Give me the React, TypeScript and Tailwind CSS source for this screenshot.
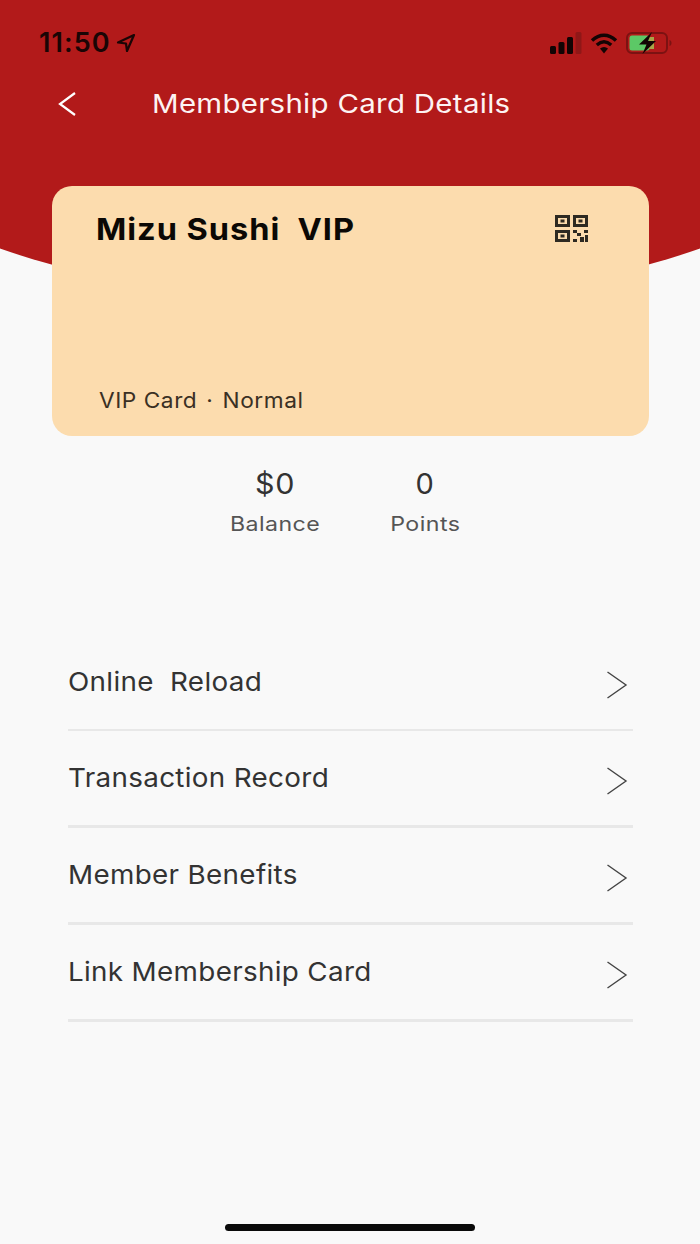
const rows = [
  { label: "Online  Reload", line: "h-[2px]" },
  { label: "Transaction Record", line: "h-[3px]" },
  { label: "Member Benefits", line: "h-[3px]" },
  { label: "Link Membership Card", line: "h-[3px]" },
];

function StatusIcons() {
  return (
    <div className="flex items-center gap-[8px]">
      <svg width="32" height="22" viewBox="0 0 32 22">
        <rect x="0" y="14" width="6" height="8" rx="1.5" fill="#120404" />
        <rect x="8.5" y="10" width="6" height="12" rx="1.5" fill="#120404" />
        <rect x="17" y="5" width="6" height="17" rx="1.5" fill="#120404" />
        <rect x="25.5" y="0" width="6" height="22" rx="1.5" fill="#8f1717" />
      </svg>
      <svg width="28" height="21" viewBox="0 0 28 21" fill="none">
        <path d="M2 7.500C9.500 .5 18.500 .5 26 7.500" stroke="#120404" strokeWidth="3.400" />
        <path d="M6.800 12C11.500 7.800 16.500 7.800 21.200 12" stroke="#120404" strokeWidth="3.400" />
        <path d="M10 15.500C12.500 13.500 15.500 13.500 18 15.500L14 20.500Z" fill="#120404" />
      </svg>
      <svg width="46" height="22" viewBox="0 0 46 22" fill="none">
        <rect x="1" y="1" width="40" height="20" rx="5" stroke="#7c1212" strokeWidth="2" />
        <rect x="3.500" y="3.500" width="20" height="15" rx="2.500" fill="#5cc866" />
        <rect x="23" y="5" width="5" height="12" fill="#a8a548" />
        <path d="M43.500 8V14C45 13.500 45.500 12.500 45.500 11C45.500 9.500 45 8.500 43.500 8Z" fill="#7c1212" />
        <path d="M26 0L13 12.500H20.500L16.500 22L30 9H22Z" fill="#120404" />
      </svg>
    </div>
  );
}

function QrIcon() {
  return (
    <svg width="33" height="27" viewBox="0 0 33 27" fill="#2e2a22">
      <path fillRule="evenodd" d="M0 0H15V12H0ZM3 3V9H12V3Z" />
      <path d="M5.500 4.500H9.500V7.500H5.500Z" />
      <path fillRule="evenodd" d="M18 0H33V12H18ZM21 3V9H30V3Z" />
      <path d="M23.500 4.500H27.500V7.500H23.500Z" />
      <path fillRule="evenodd" d="M0 15H15V27H0ZM3 18V24H12V18Z" />
      <path d="M5.500 19.500H9.500V22.500H5.500Z" />
      <path d="M18 15H22V18H18ZM29 15H33V18H29ZM22 18H26V21H22ZM18 24H22V27H18ZM25 22H29V27H25ZM30 20H33V27H30Z" />
    </svg>
  );
}

export default function App() {
  return (
    <div className="relative h-[1244px] w-[700px] overflow-hidden bg-[#f9f9f9] font-['Inter',sans-serif]">
      <div className="absolute left-[-150px] top-0 h-[300px] w-[1000px] rounded-b-[500px_180px] bg-[#b21a1a]" />

      <div className="relative flex h-full flex-col">
        <div className="flex h-[84px] items-start justify-between pl-[39px] pr-[28px] pt-[27px]">
          <div className="flex items-center gap-[5px]">
            <span className="text-[27px] font-semibold leading-[32px] tracking-[1.1px] text-[#1a0505]">
              11:50
            </span>
            <svg width="20" height="20" viewBox="0 0 20 20" fill="none">
              <path d="M18 2L2 9.500L10 10.500L11 18Z" stroke="#1a0505" strokeWidth="2.200" strokeLinejoin="round" />
            </svg>
          </div>
          <div className="pt-[5px]">
            <StatusIcons />
          </div>
        </div>

        <div className="flex h-[40px] items-center">
          <svg className="ml-[57px]" width="20" height="26" viewBox="0 0 20 26" fill="none">
            <path d="M18 2L3 13L18 24" stroke="#fff" strokeWidth="2.200" />
          </svg>
          <h1 className="ml-[75px] origin-left scale-x-[1.133] whitespace-nowrap text-[26px] font-normal leading-[40px] tracking-[0.25px] text-[#fdf3f3]">
            Membership Card Details
          </h1>
        </div>

        <div className="ml-[52px] mt-[62px] flex h-[250px] w-[597px] flex-col justify-between rounded-[20px] bg-[#fcdcae] pb-[21px] pl-[44px] pr-[61px] pt-[24px]">
          <div className="flex items-start justify-between">
            <span className="origin-left scale-x-[1.084] whitespace-pre text-[30px] font-bold leading-[38px] tracking-[0.9px] text-[#0b0805]">
              Mizu Sushi  VIP
            </span>
            <div className="pt-[5px]">
              <QrIcon />
            </div>
          </div>
          <span className="ml-[3px] origin-left scale-x-[1.08] self-start whitespace-pre text-[21px] leading-[28px] tracking-[0.5px] text-[#3a3024]">
            VIP Card <span className="mx-[2px]">·</span> Normal
          </span>
        </div>

        <div className="ml-[231px] mt-[27px] flex gap-[70px]">
          <div className="flex w-[89px] flex-col items-center">
            <span className="scale-x-[1.05] text-[29px] leading-[42px] tracking-[0.6px] text-[#333]">$0</span>
            <span className="mt-[6px] scale-x-[1.155] whitespace-nowrap text-[20px] leading-[26px] tracking-[0.4px] text-[#555]">
              Balance
            </span>
          </div>
          <div className="flex w-[70px] flex-col items-center">
            <span className="text-[29px] leading-[42px] tracking-[0.6px] text-[#333]">0</span>
            <span className="mt-[6px] scale-x-[1.16] whitespace-nowrap text-[20px] leading-[26px] tracking-[0.4px] text-[#555]">
              Points
            </span>
          </div>
        </div>

        <div className="ml-[68px] mt-[98px] w-[565px]">
          {rows.map((row) => (
            <div key={row.label}>
              <div className="flex h-[94px] items-center justify-between pr-[5px]">
                <span className="origin-left scale-x-[1.07] whitespace-pre text-[26px] leading-[36px] tracking-[0.3px] text-[#333]">
                  {row.label}
                </span>
                <svg className="mt-[6px]" width="22" height="28" viewBox="0 0 22 28" fill="none">
                  <path d="M1.500 1L20 14L1.500 27" stroke="#444" strokeWidth="1.400" />
                </svg>
              </div>
              <div className={`${row.line} bg-[#e8e8e8]`} />
            </div>
          ))}
        </div>

        <div className="mt-auto flex justify-center pb-[13px]">
          <div className="h-[7px] w-[250px] rounded-full bg-[#0a0a0a]" />
        </div>
      </div>
    </div>
  );
}
